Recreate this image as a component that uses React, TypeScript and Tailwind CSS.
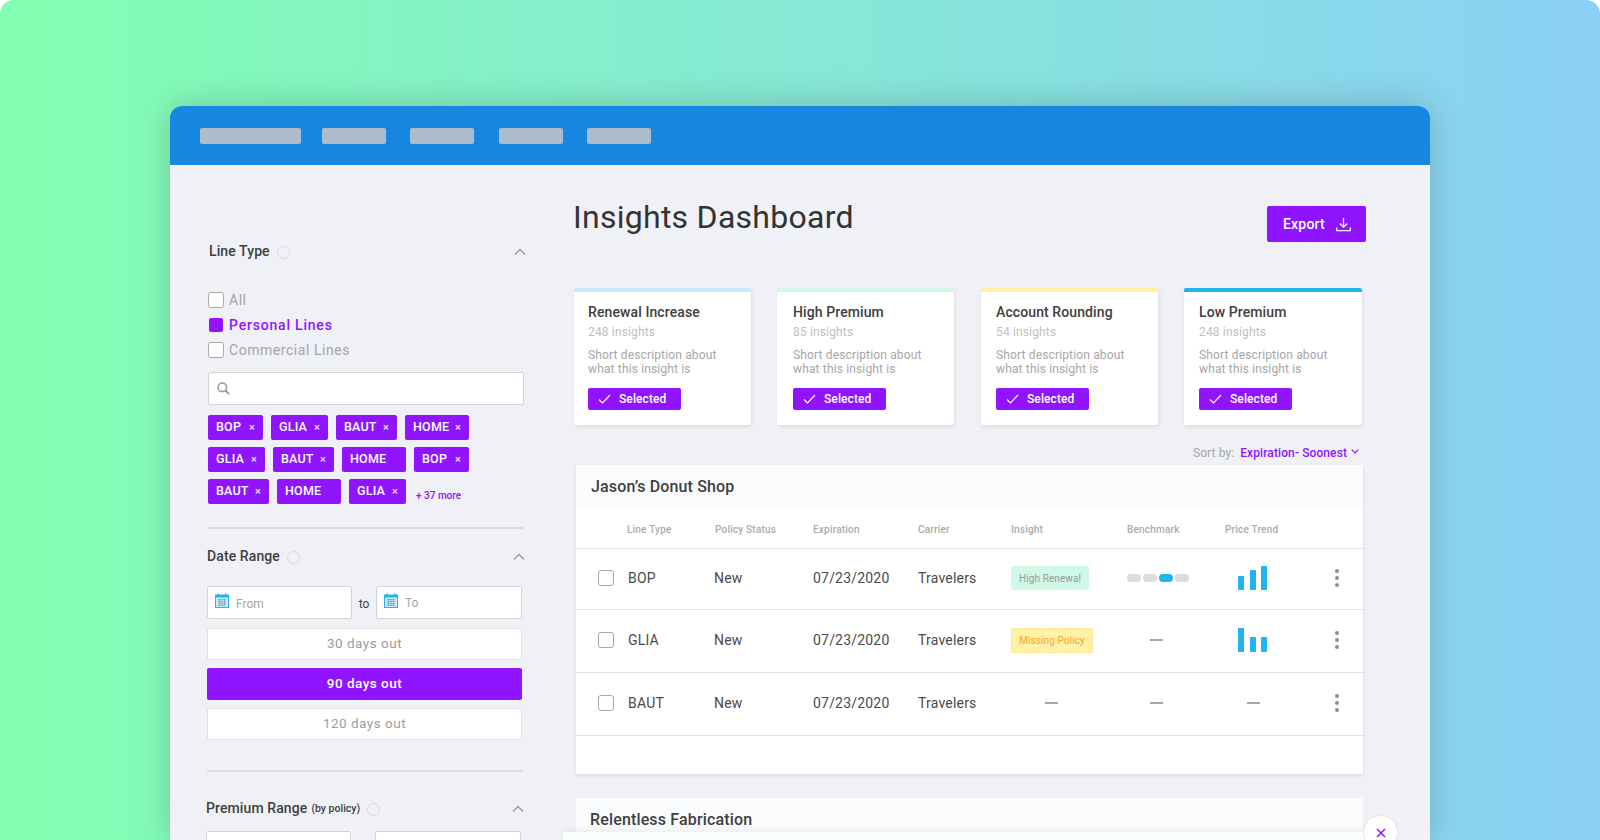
import React from "react";

const Chevron = () => (
  <svg width="12" height="8" viewBox="0 0 12 8" fill="none" className="shrink-0 -mr-[2px]">
    <path d="M1 6.5 L6 1.5 L11 6.5" stroke="#9a9a9a" strokeWidth="1.4" />
  </svg>
);

const Dot = () => <span className="inline-block w-[13px] h-[13px] rounded-full border border-[#d9dade] ml-[7px] mt-[2px]" />;

const SectionHead = ({ title, extra, cls }: { title: string; extra?: string; cls: string }) => (
  <div className={`flex items-center justify-between ${cls}`}>
    <div className="flex items-center">
      <span className="text-[14px] font-medium text-[#404040] tracking-[0.1px]">{title}</span>
      {extra && <span className="text-[10.5px] font-medium text-[#404040] ml-[4px]">{extra}</span>}
      <Dot />
    </div>
    <Chevron />
  </div>
);

const Tag = ({ t, w, x = true }: { t: string; w: string; x?: boolean }) => (
  <div className={`${w} h-[25px] bg-[#9114ff] rounded-[2px] flex items-center justify-between pl-[8px] pr-[8px] text-white text-[12.5px] font-medium tracking-[0.2px]`}>
    <span>{t}</span>
    {x && <span className="text-[11px] leading-none text-[#e9d5ff]">×</span>}
  </div>
);

const Calendar = () => (
  <svg width="14" height="15" viewBox="0 0 14 15" className="shrink-0 -mt-[4px]">
    <rect x="0.5" y="2" width="13" height="12.5" fill="#c6ecfa" stroke="#22b5ec" />
    <rect x="0.5" y="2" width="13" height="2.5" fill="#22b5ec" />
    <rect x="2.5" y="0.5" width="1.4" height="2.5" fill="#22b5ec" />
    <rect x="10" y="0.5" width="1.4" height="2.5" fill="#22b5ec" />
    <path d="M3 6.5h8M3 8.5h8M3 10.5h8M3 12.5h8M4.5 6v7M7 6v7M9.5 6v7" stroke="#6aa5c8" strokeWidth="0.7" />
  </svg>
);

const DateInput = ({ t, w, textCls }: { t: string; w: string; textCls: string }) => (
  <div className={`${w} h-[33px] bg-white border border-[#d3d4d8] rounded-[2px] flex items-center pl-[7px]`}>
    <Calendar />
    <span className={`ml-[7px] text-[12px] text-[#a5a5a5] ${textCls}`}>{t}</span>
  </div>
);

const DayBtn = ({ t, on }: { t: string; on?: boolean }) => (
  <div
    className={`w-[315px] h-[32px] pb-[1px] rounded-[2px] flex items-center justify-center text-[13.5px] tracking-[0.5px] ${
      on ? "bg-[#9114ff] text-white font-medium tracking-[0.2px]" : "bg-white border border-[#e0e1e5] text-[#9c9c9c]"
    }`}
  >
    {t}
  </div>
);

const Box = ({ cls = "" }: { cls?: string }) => (
  <span className={`block w-[16px] h-[16px] rounded-[3px] border border-[#a9a9a9] bg-white shrink-0 ${cls}`} />
);

const InsightCard = ({ stripe, title, count, cls }: { stripe: string; title: string; count: string; cls: string }) => (
  <div className={`${cls} h-[137px] bg-white rounded-[2px] border-t-4 ${stripe} shadow-[1px_2px_4px_rgba(0,0,0,0.09)]`}>
    <div className="mt-[12px] text-[14px] leading-[17px] font-medium text-[#404040] tracking-[0.1px]">{title}</div>
    <div className="mt-[4px] text-[12px] leading-[15px] text-[#c0c0c0] tracking-[0.15px]">{count}</div>
    <div className="mt-[8px] text-[12px] leading-[14px] text-[#a6a6a6] tracking-[0.15px]">
      Short description about
      <br />
      what this insight is
    </div>
    <div className="mt-[12px] w-[93px] h-[22px] bg-[#9114ff] rounded-[2px] flex items-center pl-[10px] text-white text-[12px] font-medium tracking-[0.1px]">
      <svg width="13" height="10" viewBox="0 0 13 10" fill="none" className="mr-[8px]">
        <path d="M1 5.5 L4.5 9 L12 1" stroke="#fff" strokeWidth="1.1" />
      </svg>
      Selected
    </div>
  </div>
);

const Bars = ({ h }: { h: [string, string, string] }) => (
  <div className="flex items-end h-[24px] gap-[5.5px]">
    <span className={`w-[6px] ${h[0]} bg-[#1fb5ec] rounded-[1px]`} />
    <span className={`w-[6px] ${h[1]} bg-[#1fb5ec] rounded-[1px]`} />
    <span className={`w-[6px] ${h[2]} bg-[#1fb5ec] rounded-[1px]`} />
  </div>
);

const Dash = () => <span className="block w-[13px] h-[1.5px] bg-[#a8a8a8]" />;

const Kebab = () => (
  <div className="flex flex-col gap-[3px]">
    <span className="w-[4px] h-[4px] rounded-full bg-[#8f8f8f]" />
    <span className="w-[4px] h-[4px] rounded-full bg-[#8f8f8f]" />
    <span className="w-[4px] h-[4px] rounded-full bg-[#8f8f8f]" />
  </div>
);

const grid = "grid grid-cols-[51px_87px_99px_105px_93px_116px_98px_1fr] items-center";

const Row = ({ name, h, insight, bench, trend }: { name: string; h: string; insight: React.ReactNode; bench: React.ReactNode; trend: React.ReactNode }) => (
  <div className={`${grid} ${h} pb-[2px] border-b border-[#dfe0e3] text-[14px] text-[#4a4a4a] tracking-[0.2px]`}>
    <div className="pl-[22px]">
      <Box />
    </div>
    <div className="pl-[1px]">{name}</div>
    <div>New</div>
    <div>07/23/2020</div>
    <div>Travelers</div>
    <div>{insight}</div>
    <div>{bench}</div>
    <div>{trend}</div>
  </div>
);

export default function App() {
  return (
    <div className="w-[1600px] h-[840px] overflow-hidden bg-white">
      <div
        className="w-[1600px] h-[840px] overflow-hidden rounded-t-[14px] bg-gradient-to-r from-[#82ffb0] to-[#8bd0f5] pt-[106px] pl-[170px]"
        style={{ fontFamily: "Roboto, 'Liberation Sans', sans-serif" }}
      >
        <div className="relative w-[1260px] h-[734px] rounded-t-[12px] overflow-hidden bg-[#f0f1f6] shadow-[0_0_36px_rgba(0,0,0,0.2)]">
          <div className="h-[59px] bg-[#1887e2] flex items-center pl-[30px]">
            <div className="w-[101px] h-[16px] bg-[#adbccb] rounded-[2px]" />
            <div className="w-[64px] h-[16px] bg-[#adbccb] rounded-[2px] ml-[21px]" />
            <div className="w-[64px] h-[16px] bg-[#adbccb] rounded-[2px] ml-[24px]" />
            <div className="w-[64px] h-[16px] bg-[#adbccb] rounded-[2px] ml-[25px]" />
            <div className="w-[64px] h-[16px] bg-[#adbccb] rounded-[2px] ml-[24px]" />
          </div>
          <div className="flex">
            <aside className="w-[403px] shrink-0 pl-[37px]">
              <div className="pl-[1px] w-[317px]">
                <SectionHead title="Line Type" cls="mt-[76px] w-[316px] pl-[1px]" />
                <div className="mt-[30px] flex items-center h-[16px]">
                  <Box />
                  <span className="ml-[5px] text-[14px] text-[#a5a5a5] tracking-[0.5px]">All</span>
                </div>
                <div className="mt-[9px] flex items-center h-[16px]">
                  <span className="w-[14px] h-[14px] ml-[1px] rounded-[2px] bg-[#9114ff] shrink-0" />
                  <span className="ml-[6px] text-[14px] font-medium text-[#9114ff] tracking-[0.8px]">Personal Lines</span>
                </div>
                <div className="mt-[9px] flex items-center h-[16px]">
                  <Box />
                  <span className="ml-[5px] text-[14px] text-[#a5a5a5] tracking-[0.55px]">Commercial Lines</span>
                </div>
                <div className="mt-[14px] w-[316px] h-[33px] bg-white border border-[#d3d4d8] rounded-[2px] flex items-center pl-[8px]">
                  <svg width="13" height="13" viewBox="0 0 13 13" fill="none">
                    <circle cx="5.3" cy="5.3" r="4.3" stroke="#9a9a9a" strokeWidth="1.6" />
                    <path d="M8.5 8.5 L12 12" stroke="#9a9a9a" strokeWidth="1.8" />
                  </svg>
                </div>
                <div className="mt-[10px] flex gap-[8px]">
                  <Tag t="BOP" w="w-[55px]" />
                  <Tag t="GLIA" w="w-[57px]" />
                  <Tag t="BAUT" w="w-[61px]" />
                  <Tag t="HOME" w="w-[64px]" />
                </div>
                <div className="mt-[7px] flex gap-[8px]">
                  <Tag t="GLIA" w="w-[57px]" />
                  <Tag t="BAUT" w="w-[61px]" />
                  <Tag t="HOME" w="w-[64px]" x={false} />
                  <Tag t="BOP" w="w-[55px]" />
                </div>
                <div className="mt-[7px] flex gap-[8px] items-center">
                  <Tag t="BAUT" w="w-[61px]" />
                  <Tag t="HOME" w="w-[64px]" x={false} />
                  <Tag t="GLIA" w="w-[57px]" />
                  <span className="ml-[2px] mt-[8px] text-[10px] font-medium text-[#9114ff]">+ 37 more</span>
                </div>
                <div className="mt-[23px] w-[316px] h-[2px] bg-[#dcdde1]" />
              </div>
              <SectionHead title="Date Range" cls="mt-[17px] w-[316px]" />
              <div className="mt-[19px] flex items-center w-[315px]">
                <DateInput t="From" w="w-[145px]" textCls="mt-[2px]" />
                <span className="w-[24px] text-center text-[12px] text-[#444] mt-[2px]">to</span>
                <DateInput t="To" w="w-[146px]" textCls="mt-[0px]" />
              </div>
              <div className="mt-[9px] flex flex-col gap-[8px]">
                <DayBtn t="30 days out" />
                <DayBtn t="90 days out" on />
                <DayBtn t="120 days out" />
              </div>
              <div className="mt-[30px] w-[316px] h-[2px] bg-[#dcdde1]" />
              <SectionHead title="Premium Range" extra="(by policy)" cls="mt-[26px] w-[316px] -ml-[1px]" />
              <div className="mt-[12px] flex w-[315px] gap-[24px] -ml-[1px]">
                <div className="w-[145px] h-[33px] bg-white border border-[#d3d4d8] rounded-[2px]" />
                <div className="w-[146px] h-[33px] bg-white border border-[#d3d4d8] rounded-[2px]" />
              </div>
            </aside>
            <main className="flex-1 min-w-0">
              <div className="flex items-start justify-between w-[793px] mt-[30px]">
                <h1 className="text-[32px] leading-[44px] font-normal text-[#333] tracking-[0.27px]">Insights Dashboard</h1>
                <button className="mt-[11px] w-[99px] h-[36px] bg-[#9114ff] rounded-[2px] flex items-center pl-[16px] text-white text-[14px] font-medium tracking-[0.2px]">
                  Export
                  <svg width="15" height="15" viewBox="0 0 15 15" fill="none" className="ml-[11px]">
                    <path d="M7.5 1 V10 M3.8 6.5 L7.5 10.2 L11.2 6.5 M0.7 10.5 V13.7 H14.3 V10.5" stroke="#fff" strokeWidth="1.3" />
                  </svg>
                </button>
              </div>
              <div className="mt-[46px] flex pl-[1px]">
                <InsightCard cls="w-[177px] pl-[14px]" stripe="border-[#c9e9fd]" title="Renewal Increase" count="248 insights" />
                <InsightCard cls="w-[177px] ml-[26px] pl-[16px]" stripe="border-[#cff8e6]" title="High Premium" count="85 insights" />
                <InsightCard cls="w-[177px] ml-[27px] pl-[15px]" stripe="border-[#fff1a8]" title="Account Rounding" count="54 insights" />
                <InsightCard cls="w-[178px] ml-[26px] pl-[15px]" stripe="border-[#1fb5ec]" title="Low Premium" count="248 insights" />
              </div>
              <div className="w-[786px] mt-[20px] h-[15px] flex items-center justify-end text-[12px] tracking-[0.1px]">
                <span className="text-[#a6a6a6]">Sort by:</span>
                <span className="ml-[6px] font-medium text-[#9114ff] tracking-[0.1px]">Expiration- Soonest</span>
                <svg width="8" height="5" viewBox="0 0 8 5" fill="none" className="ml-[4px] mb-[2px]">
                  <path d="M0.7 0.7 L4 4 L7.3 0.7" stroke="#9114ff" strokeWidth="1.1" />
                </svg>
              </div>
              <section className="ml-[3px] w-[787px] h-[309px] mt-[5px] bg-white rounded-[2px] shadow-[0_2px_4px_rgba(0,0,0,0.09)]">
                <div className="h-[44px] bg-[#fafbfd] pl-[15px] flex items-center text-[16px] font-medium text-[#404040] tracking-[0.15px]">
                  Jason’s Donut Shop
                </div>
                <div className={`${grid} h-[40px] pt-[2px] border-b border-[#dfe0e3] text-[10px] font-medium text-[#aaaaaa] tracking-[0.2px]`}>
                  <div />
                  <div>Line Type</div>
                  <div className="pl-[1px]">Policy Status</div>
                  <div>Expiration</div>
                  <div>Carrier</div>
                  <div>Insight</div>
                  <div>Benchmark</div>
                  <div>Price Trend</div>
                </div>
                <Row
                  name="BOP"
                  h="h-[61px]"
                  insight={
                    <span className="flex items-center justify-center w-[78px] h-[24px] rounded-[2px] bg-[#cff8e6] text-[10px] text-[#9a9a9a] tracking-[0.1px]">
                      High Renewal
                    </span>
                  }
                  bench={
                    <div className="flex gap-[2px]">
                      <span className="w-[14px] h-[8px] rounded-full bg-[#dcdcdc]" />
                      <span className="w-[14px] h-[8px] rounded-full bg-[#dcdcdc]" />
                      <span className="w-[14px] h-[8px] rounded-full bg-[#1fb5ec]" />
                      <span className="w-[14px] h-[8px] rounded-full bg-[#dcdcdc]" />
                    </div>
                  }
                  trend={
                    <div className="flex items-center justify-between w-[114px] pl-[13px]">
                      <Bars h={["h-[14px]", "h-[20px]", "h-[24px]"]} />
                      <Kebab />
                    </div>
                  }
                />
                <Row
                  name="GLIA"
                  h="h-[63px]"
                  insight={
                    <span className="flex items-center justify-center w-[82px] h-[25px] rounded-[2px] bg-[#fff1a8] border border-dashed border-[#ffe585] text-[10px] text-[#f5a623] tracking-[0.1px]">
                      Missing Policy
                    </span>
                  }
                  bench={
                    <div className="pl-[23px]">
                      <Dash />
                    </div>
                  }
                  trend={
                    <div className="flex items-center justify-between w-[114px] pl-[13px]">
                      <Bars h={["h-[24px]", "h-[15px]", "h-[15px]"]} />
                      <Kebab />
                    </div>
                  }
                />
                <Row
                  name="BAUT"
                  h="h-[63px]"
                  insight={
                    <div className="pl-[34px]">
                      <Dash />
                    </div>
                  }
                  bench={
                    <div className="pl-[23px]">
                      <Dash />
                    </div>
                  }
                  trend={
                    <div className="flex items-center justify-between w-[114px] pl-[22px]">
                      <Dash />
                      <Kebab />
                    </div>
                  }
                />
              </section>
              <section className="ml-[3px] w-[787px] mt-[24px] h-[80px] bg-[#fafbfd] pl-[14px] pt-[12px] text-[16px] leading-[20px] font-medium text-[#404040] tracking-[0.15px]">
                Relentless Fabrication
              </section>
            </main>
          </div>
          <div className="absolute left-[393px] bottom-0 w-[810px] h-[8px] bg-[#fbfffe] shadow-[0_-2px_6px_rgba(0,0,0,0.06)]" />
          <div className="absolute left-[1193px] top-[709px] w-[35px] h-[35px] rounded-full bg-white border border-[#e6e7ea] flex items-center justify-center">
            <svg width="10" height="10" viewBox="0 0 10 10" fill="none">
              <path d="M1 1 L9 9 M9 1 L1 9" stroke="#9114ff" strokeWidth="1.5" />
            </svg>
          </div>
        </div>
      </div>
    </div>
  );
}
